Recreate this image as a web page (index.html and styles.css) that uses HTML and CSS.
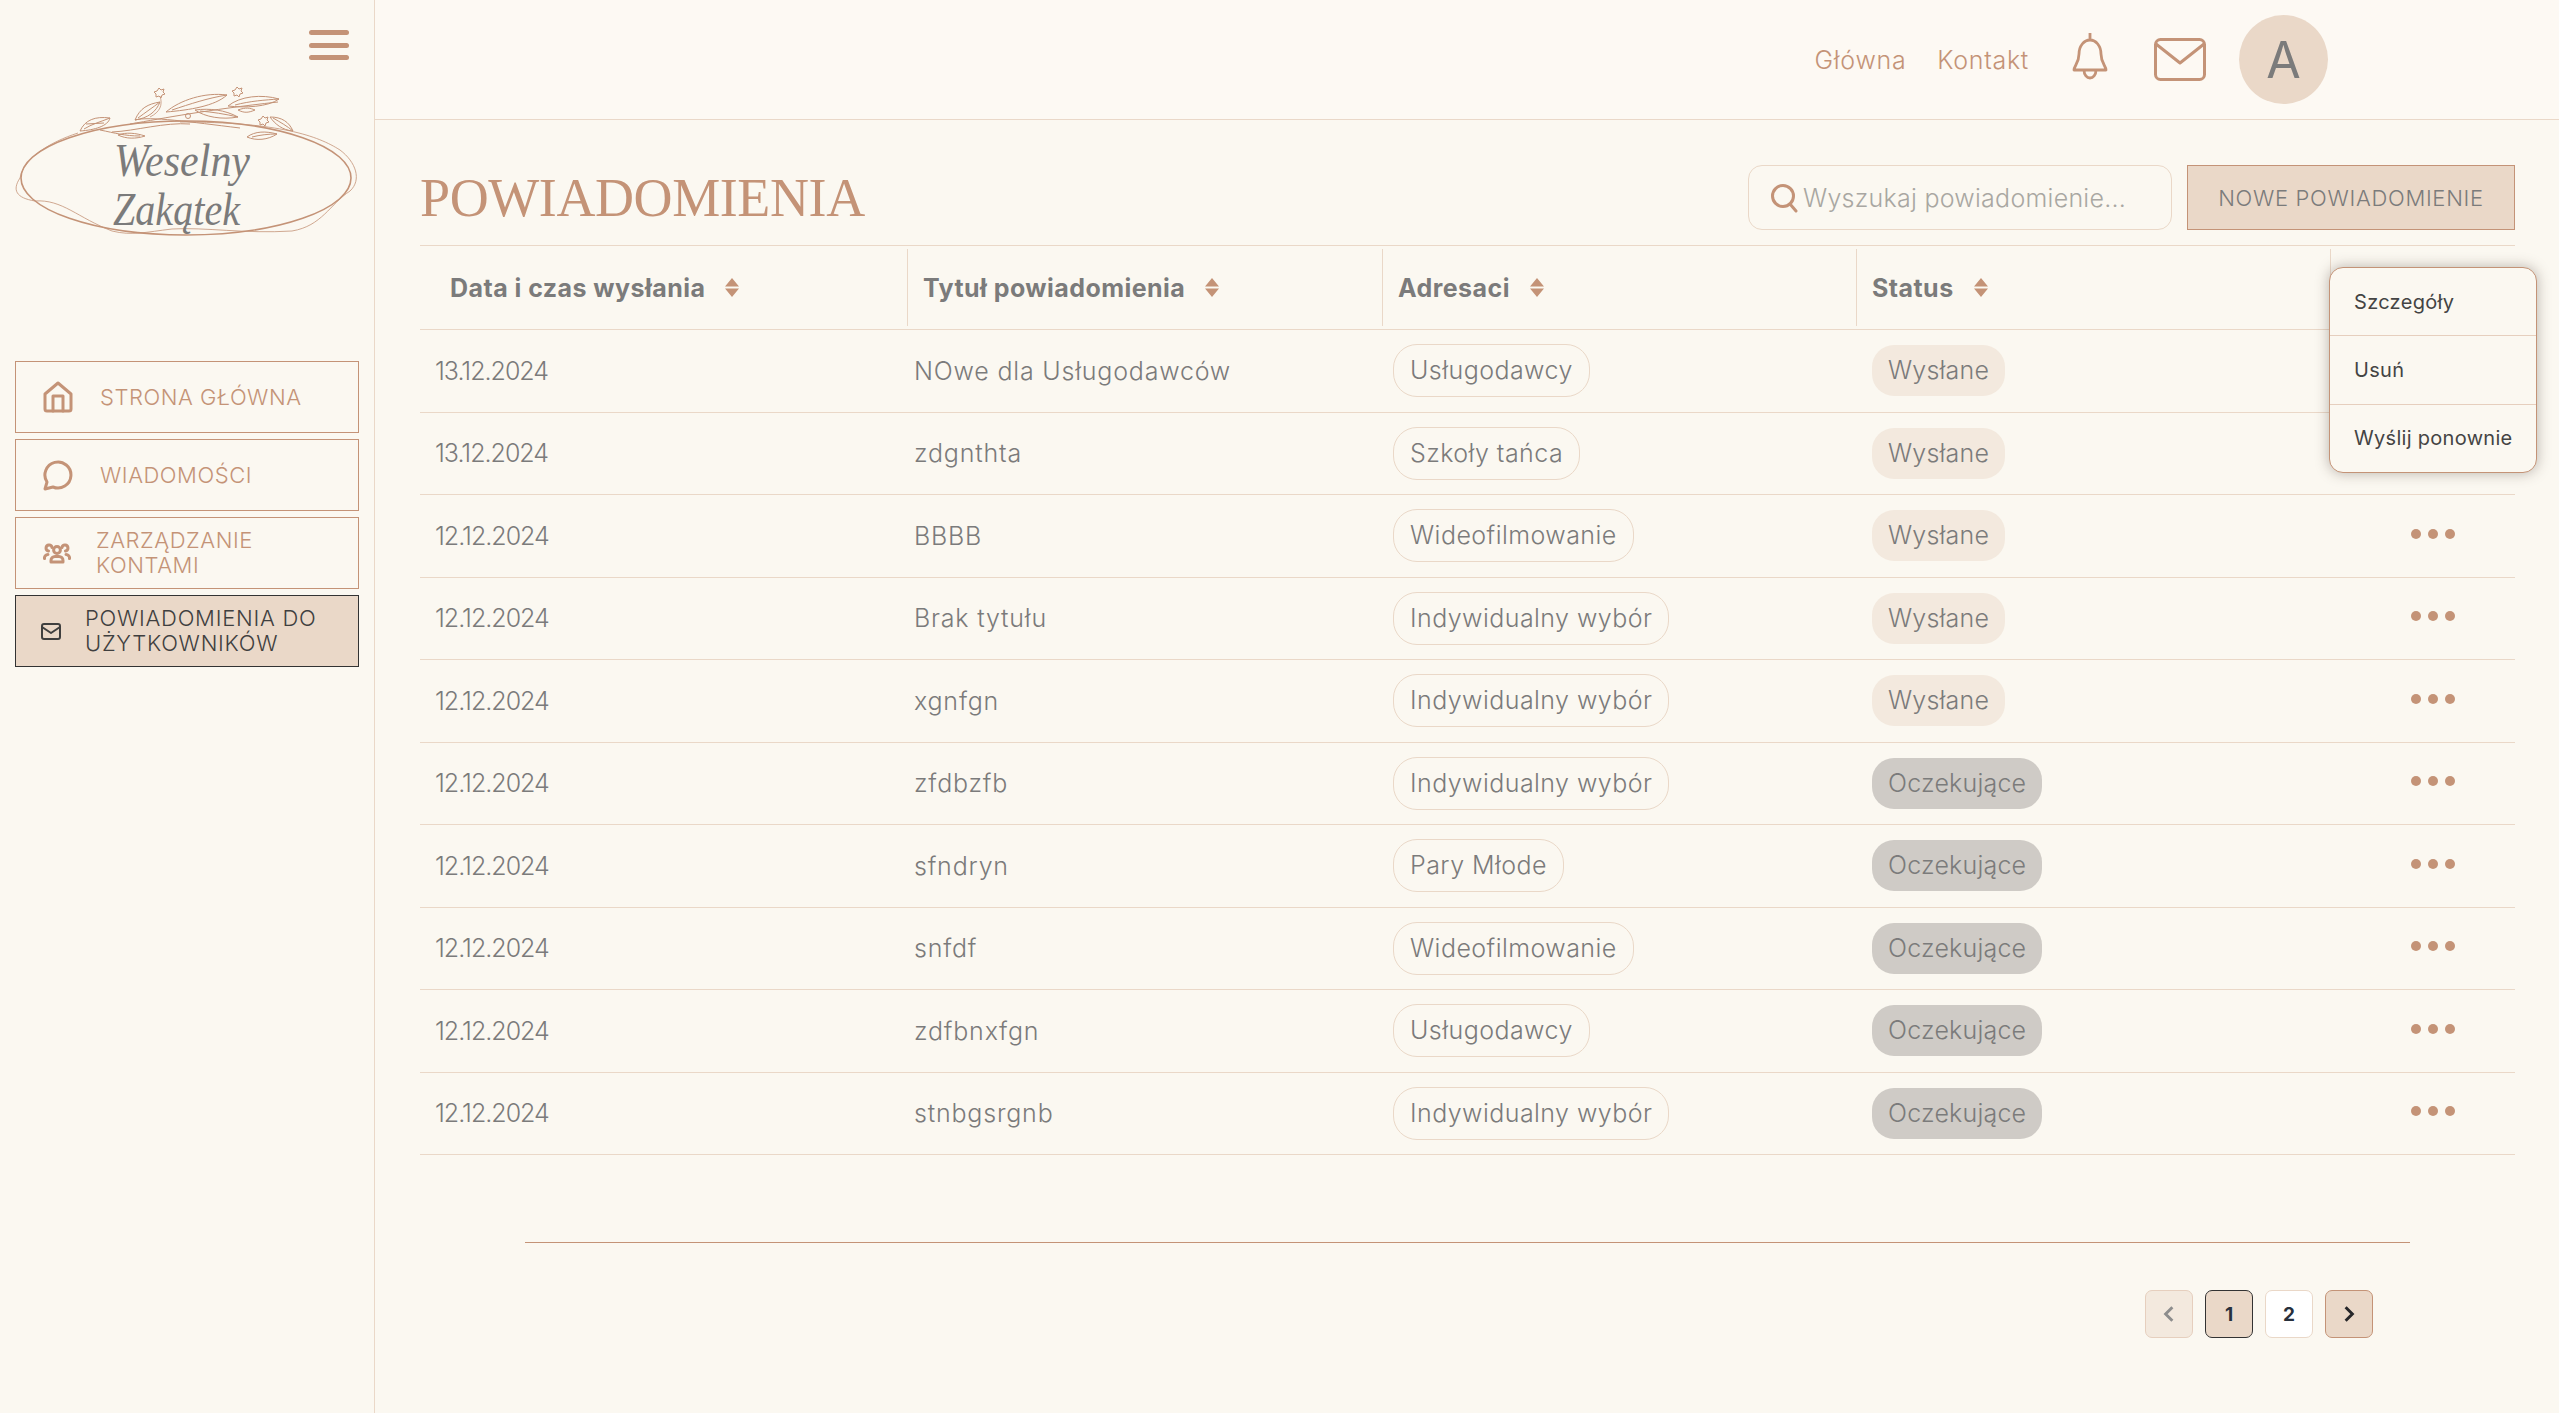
FILE: index.html
```html
<!DOCTYPE html>
<html lang="pl">
<head>
<meta charset="utf-8">
<title>Powiadomienia</title>
<link rel="stylesheet" href="styles.css">
</head>
<body>
<div class="app">
  <aside class="sidebar">
    <div class="burger-row">
      <button class="burger" aria-label="Menu"><span></span><span></span><span></span></button>
    </div>
    <svg class="logo" viewBox="0 80 375 170" width="375" height="170">
      <g fill="none" stroke="#c49377">
        <ellipse cx="186" cy="178" rx="165" ry="57" stroke-width="1.6"/>
        <path stroke-width=".8" d="M78 133C50 142 24 158 20 178C12 190 16 198 35 201C62 199 78 218 112 231C132 236 146 232 172 229C205 227 245 234 292 231C322 226 330 204 350 191C362 180 356 162 340 150C318 136 280 122 180 122"/>
        <path stroke-width="1" d="M130 124C165 118 205 110 278 102M135 120C150 116 190 122 240 128M112 132C135 131 165 122 190 124M100 130C115 133 125 136 140 136"/>
        <path stroke-width="1" d="M80 131C85 120 95 116 110 118C108 126 95 130 80 131ZM84 129C92 124 100 122 110 118M86 124L104 123"/>
        <path stroke-width="1" d="M135 120C140 108 148 104 160 102C156 112 148 118 135 120ZM138 118C146 112 152 108 160 102"/>
        <path stroke-width="1" d="M166 112C180 100 205 92 227 95C215 106 190 110 166 112ZM172 110C190 104 208 98 227 95"/>
        <path stroke-width="1" d="M228 106C240 96 262 94 279 99C268 107 245 108 228 106ZM235 105C250 101 265 100 279 99"/>
        <path stroke-width="1" d="M195 110C210 108 225 110 238 117C222 120 205 117 195 110ZM200 111C212 112 225 114 238 117"/>
        <path stroke-width="1" d="M238 110C246 107 250 108 255 110C248 113 244 113 238 110Z"/>
        <path stroke-width="1" d="M270 117C282 117 289 122 293 131C282 130 275 124 270 117ZM273 118C280 122 287 126 293 131"/>
        <path stroke-width="1" d="M247 137C255 131 266 131 277 134C268 140 256 141 247 137ZM252 137C260 135 268 134 277 134"/>
        <path stroke-width="1" d="M118 135C126 132 136 133 145 136C136 139 126 139 118 135Z"/>
        <path stroke-width=".8" d="M160 96C163 105 160 112 150 117"/>
        <path stroke-width="1" d="M159 88l2 2 3-1-1 3 2 2-3 1-1 3-2-2-3 1 0-3-2-2 3-1ZM237 87l2 2 3-1-1 3 2 2-3 1-1 3-2-2-3 1 0-3-2-2 3-1ZM263 116l2 2 3-1-1 3 2 2-3 1-1 3-2-2-3 1 0-3-2-2 3-1Z"/>
        <circle cx="188" cy="116" r="2.500" stroke-width="1"/>
      </g>
      <text class="logo-text" x="114" y="176" textLength="136" lengthAdjust="spacingAndGlyphs">Weselny</text>
      <text class="logo-text" x="113" y="225" textLength="127" lengthAdjust="spacingAndGlyphs">Zakątek</text>
    </svg>
    <nav class="nav">
      <a class="nav-item">
        <svg class="nav-icon home" viewBox="0 0 30 32"><path d="M2 13 15 2l13 11v15a2 2 0 0 1-2 2H4a2 2 0 0 1-2-2Z"/><path d="M10 30V15h10v15"/></svg>
        <span class="nav-label pad-a">STRONA GŁÓWNA</span>
      </a>
      <a class="nav-item">
        <svg class="nav-icon home" viewBox="0 0 30 32"><path d="M2 30l2-7A13 13 0 1 1 10 28Z"/></svg>
        <span class="nav-label pad-a">WIADOMOŚCI</span>
      </a>
      <a class="nav-item">
        <svg class="nav-icon people" viewBox="0 0 28 22"><circle cx="14" cy="8" r="3.400"/><path d="M8 20v-1.500a4 4 0 0 1 4-4h4a4 4 0 0 1 4 4V20Z"/><path d="M9 5.500A3 3 0 1 0 5.500 9M19 5.500A3 3 0 1 1 22.500 9M1.500 16.500A3.500 3.500 0 0 1 5 12.500M26.500 16.500A3.500 3.500 0 0 0 23 12.500"/></svg>
        <span class="nav-label pad-b">ZARZĄDZANIE<br>KONTAMI</span>
      </a>
      <a class="nav-item is-active">
        <svg class="nav-icon mail" viewBox="0 0 20 17"><rect x="1" y="1" width="18" height="15" rx="2"/><path d="M1 4l9 6 9-6"/></svg>
        <span class="nav-label pad-c">POWIADOMIENIA DO<br>UŻYTKOWNIKÓW</span>
      </a>
    </nav>
  </aside>
  <div class="main">
    <header class="topbar">
      <a class="top-link">Główna</a>
      <a class="top-link">Kontakt</a>
      <svg class="bell" viewBox="0 0 38 48"><path d="M19 1v7M3 38c0-4 5-7 5-16C8 14 13 8 19 8s11 6 11 14c0 9 5 12 5 16ZM13 38c0 5 3 8 6 8s6-3 6-8" /></svg>
      <svg class="envelope" viewBox="0 0 52 43"><rect x="1.500" y="1.500" width="49" height="40" rx="5"/><path d="M2 6l24 19L50 6"/></svg>
      <div class="avatar">A</div>
    </header>
    <div class="content">
      <div class="page-head">
        <h1 class="page-title">POWIADOMIENIA</h1>
        <div class="search">
          <svg class="search-icon" viewBox="0 0 28 30"><circle cx="13" cy="13" r="10.500"/><path d="M20 21l6 7"/></svg>
          <span class="placeholder">Wyszukaj powiadomienie...</span>
        </div>
        <button class="primary-btn">NOWE POWIADOMIENIE</button>
      </div>
      <div class="table-wrap">
        <table class="table">
          <colgroup><col class="c1"><col class="c2"><col class="c3"><col class="c4"><col></colgroup>
          <thead>
            <tr>
              <th class="p30"><span class="th-in">Data i czas wysłania<svg class="sort" viewBox="0 0 14 19"><path d="M7 0l7 8.500H0ZM7 19l7-8.500H0Z"/></svg></span></th>
              <th><span class="th-in">Tytuł powiadomienia<svg class="sort" viewBox="0 0 14 19"><path d="M7 0l7 8.500H0ZM7 19l7-8.500H0Z"/></svg></span></th>
              <th><span class="th-in">Adresaci<svg class="sort" viewBox="0 0 14 19"><path d="M7 0l7 8.500H0ZM7 19l7-8.500H0Z"/></svg></span></th>
              <th><span class="th-in">Status<svg class="sort" viewBox="0 0 14 19"><path d="M7 0l7 8.500H0ZM7 19l7-8.500H0Z"/></svg></span></th>
              <th class="last"></th>
            </tr>
          </thead>
          <tbody>
            <tr><td class="date">13.12.2024</td><td class="title">NOwe dla Usługodawców</td><td class="addr"><span class="pill">Usługodawcy</span></td><td class="stat"><span class="status sent">Wysłane</span></td><td class="act"><span class="dots"><i></i><i></i><i></i></span></td></tr>
            <tr><td class="date">13.12.2024</td><td class="title">zdgnthta</td><td class="addr"><span class="pill">Szkoły tańca</span></td><td class="stat"><span class="status sent">Wysłane</span></td><td class="act"><span class="dots"><i></i><i></i><i></i></span></td></tr>
            <tr><td class="date">12.12.2024</td><td class="title">BBBB</td><td class="addr"><span class="pill">Wideofilmowanie</span></td><td class="stat"><span class="status sent">Wysłane</span></td><td class="act"><span class="dots"><i></i><i></i><i></i></span></td></tr>
            <tr><td class="date">12.12.2024</td><td class="title">Brak tytułu</td><td class="addr"><span class="pill">Indywidualny wybór</span></td><td class="stat"><span class="status sent">Wysłane</span></td><td class="act"><span class="dots"><i></i><i></i><i></i></span></td></tr>
            <tr><td class="date">12.12.2024</td><td class="title">xgnfgn</td><td class="addr"><span class="pill">Indywidualny wybór</span></td><td class="stat"><span class="status sent">Wysłane</span></td><td class="act"><span class="dots"><i></i><i></i><i></i></span></td></tr>
            <tr><td class="date">12.12.2024</td><td class="title">zfdbzfb</td><td class="addr"><span class="pill">Indywidualny wybór</span></td><td class="stat"><span class="status pending">Oczekujące</span></td><td class="act"><span class="dots"><i></i><i></i><i></i></span></td></tr>
            <tr><td class="date">12.12.2024</td><td class="title">sfndryn</td><td class="addr"><span class="pill">Pary Młode</span></td><td class="stat"><span class="status pending">Oczekujące</span></td><td class="act"><span class="dots"><i></i><i></i><i></i></span></td></tr>
            <tr><td class="date">12.12.2024</td><td class="title">snfdf</td><td class="addr"><span class="pill">Wideofilmowanie</span></td><td class="stat"><span class="status pending">Oczekujące</span></td><td class="act"><span class="dots"><i></i><i></i><i></i></span></td></tr>
            <tr><td class="date">12.12.2024</td><td class="title">zdfbnxfgn</td><td class="addr"><span class="pill">Usługodawcy</span></td><td class="stat"><span class="status pending">Oczekujące</span></td><td class="act"><span class="dots"><i></i><i></i><i></i></span></td></tr>
            <tr><td class="date">12.12.2024</td><td class="title">stnbgsrgnb</td><td class="addr"><span class="pill">Indywidualny wybór</span></td><td class="stat"><span class="status pending">Oczekujące</span></td><td class="act"><span class="dots"><i></i><i></i><i></i></span></td></tr>
          </tbody>
        </table>
        <div class="dropdown">
          <div class="dd-item">Szczegóły</div>
          <div class="dd-item">Usuń</div>
          <div class="dd-item">Wyślij ponownie</div>
        </div>
      </div>
      <div class="rule"></div>
      <div class="pagination">
        <button class="page prev"><svg viewBox="0 0 12 16"><path d="M9 2 3 8l6 6"/></svg></button>
        <button class="page current">1</button>
        <button class="page plain">2</button>
        <button class="page next"><svg viewBox="0 0 12 16"><path d="M3 2l6 6-6 6"/></svg></button>
      </div>
    </div>
  </div>
</div>
</body>
</html>
```
FILE: styles.css
```css
* { box-sizing: border-box; }
html, body { margin: 0; height: 100%; overflow: hidden; }
body { background: #fbf8f1; font-family: Inter, "Liberation Sans", sans-serif; color: #7b7b7b; }
button { font-family: inherit; padding: 0; cursor: pointer; }
.app { display: flex; height: 1413px; }

.sidebar { width: 375px; flex: none; border-right: 1px solid #ead8c8; background: #fbf8f1; }
.burger-row { display: flex; justify-content: flex-end; padding: 30px 25px 0 0; }
.burger { display: flex; flex-direction: column; gap: 7.500px; width: 40px; background: none; border: 0; }
.burger span { display: block; height: 5px; border-radius: 3px; background: #c49377; }
.logo { display: block; margin-top: 20px; }
.logo-text { font-family: "Liberation Serif", serif; font-style: italic; font-size: 46px; fill: #7b7b7b; }
.nav { display: flex; flex-direction: column; gap: 6px; margin: 111px 15px 0; }
.nav-item { display: flex; align-items: center; height: 72px; border: 1px solid #c49377; color: #c49377; font-size: 22px; letter-spacing: .55px; font-weight: 300; line-height: 25px; }
.nav-item.is-active { background: #ead8c8; border-color: #333; color: #3f3f3f; letter-spacing: .75px; }
.nav-icon { flex: none; fill: none; stroke: currentColor; stroke-linejoin: round; stroke-linecap: round; }
.home { width: 30px; height: 32px; margin-left: 27px; stroke-width: 3; }
.people { width: 28px; height: 22px; margin-left: 27px; stroke-width: 3; }
.mail { width: 20px; height: 17px; margin-left: 25px; stroke-width: 2; }
.pad-a { margin-left: 27px; }
.pad-b { margin-left: 25px; }
.pad-c { margin-left: 24px; }

.main { flex: 1; min-width: 0; }
.topbar { display: flex; align-items: center; height: 120px; border-bottom: 1px solid #ead8c8; padding-right: 231px; justify-content: flex-end; background: #fdf9f3; }
.top-link { color: #c49377; font-size: 25px; letter-spacing: .7px; font-weight: 300; margin-right: 31px; }
.bell { width: 40px; height: 48px; fill: none; stroke: #c49377; stroke-width: 2.800; stroke-linejoin: round; margin: 0 44px 7px 10px; }
.envelope { width: 52px; height: 43px; fill: none; stroke: #c49377; stroke-width: 3; stroke-linejoin: round; margin-right: 33px; }
.avatar { width: 89px; height: 89px; border-radius: 50%; background: #ead8c8; display: flex; align-items: center; justify-content: center; font-size: 50px; font-weight: 400; color: #7b7b7b; }

.content { padding: 45px 44px 0 45px; }
.page-head { display: flex; align-items: center; height: 65px; margin-bottom: 15px; }
.page-title { flex: 1; margin: 0; font-family: "Liberation Serif", serif; font-weight: 400; font-size: 54px; letter-spacing: -.4px; color: #c49377; }
.search { display: flex; align-items: center; width: 424px; height: 65px; border: 1px solid #ead8c8; border-radius: 14px; padding-left: 21px; }
.search-icon { width: 28px; height: 30px; fill: none; stroke: #c49377; stroke-width: 3; stroke-linecap: round; }
.placeholder { margin-left: 5px; font-size: 25px; letter-spacing: .26px; font-weight: 300; color: #a9a7a2; }
.primary-btn { width: 328px; height: 65px; margin-left: 15px; background: #ead8c8; border: 1px solid #c49377; color: #7b7b7b; font-size: 22px; letter-spacing: .7px; font-weight: 300; }

.table-wrap { position: relative; }
.table { width: 2095px; table-layout: fixed; border-collapse: collapse; border-top: 1px solid #ead8c8; }
.c1 { width: 488px; }
.c2 { width: 475px; }
.c3 { width: 474px; }
.c4 { width: 474px; }
.table th { position: relative; height: 84px; padding: 0 0 0 15px; text-align: left; font-size: 25px; letter-spacing: .45px; font-weight: 700; color: #7b7b7b; border-bottom: 1px solid #ead8c8; }
.table th.p30 { padding-left: 30px; }
.table th::after { content: ""; position: absolute; right: 0; top: 3px; bottom: 3px; width: 1px; background: #ead8c8; }
.table th.last::after { display: none; }
.th-in { display: inline-flex; align-items: center; }
.sort { width: 14px; height: 19px; margin-left: 20px; fill: #c49377; }
.table td { height: 82.500px; padding: 0; font-size: 25px; font-weight: 300; color: #7b7b7b; border-bottom: 1px solid #ead8c8; }
.table .date { padding-left: 15px; letter-spacing: -1px; }
.table .title { padding-left: 6px; letter-spacing: .8px; }
.table .addr { padding-left: 10px; letter-spacing: .45px; }
.table .stat { padding-left: 15px; letter-spacing: .2px; }
.pill { display: inline-block; height: 53px; line-height: 51px; padding: 0 16px; border: 1px solid #ead8c8; border-radius: 24px; }
.status { display: inline-block; height: 51px; line-height: 51px; padding: 0 16px; border-radius: 22px; }
.sent { background: #f3e9de; }
.pending { background: #cfcbc6; }
.act { text-align: center; }
.dots { display: inline-flex; gap: 7px; vertical-align: middle; position: relative; left: 10px; top: -4px; }
.dots i { display: block; width: 10px; height: 10px; border-radius: 50%; background: #c49377; }

.dropdown { position: absolute; top: 22px; right: -22px; width: 208px; height: 206px; background: #fbf8f1; border: 1px solid #c49377; border-radius: 14px; box-shadow: 0 0 14px rgba(60, 50, 40, .35); display: flex; flex-direction: column; }
.dd-item { flex: 1; display: flex; align-items: center; padding-left: 24px; font-size: 20px; letter-spacing: .3px; font-weight: 400; color: #444; }
.dd-item + .dd-item { border-top: 1px solid #e6cfbe; }

.rule { height: 1px; margin: 87px 105px 0; background: #c49377; }
.pagination { display: flex; justify-content: flex-end; gap: 12px; margin-top: 47px; padding-right: 142px; }
.page { display: flex; align-items: center; justify-content: center; width: 48px; height: 48px; border-radius: 7px; font-size: 19px; font-weight: 700; color: #27303c; border: 1px solid #ead8c8; background: #fff; }
.page svg { width: 14px; height: 18px; fill: none; stroke-width: 2.600; }
.prev { background: #f3e9de; border-color: #e6cfbe; }
.prev svg { stroke: #8d8d8d; }
.current { background: #ead8c8; border-color: #333; }
.next { background: #ead8c8; border-color: #c49377; }
.next svg { stroke: #27272a; }
```
